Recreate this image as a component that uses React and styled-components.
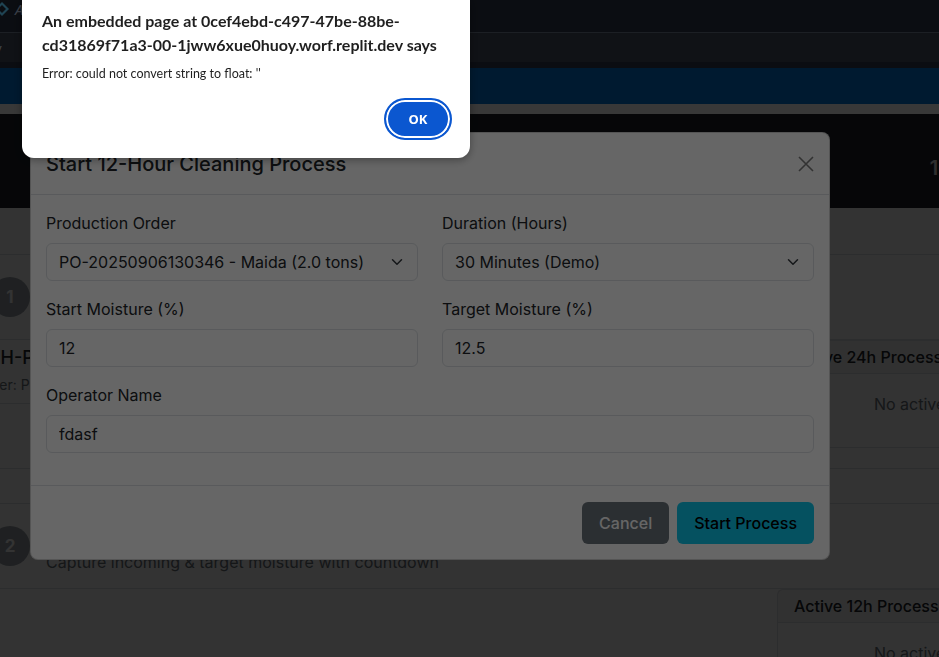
import React from 'react';
import styled, { createGlobalStyle } from 'styled-components';

const Global = createGlobalStyle`
  html, body { margin: 0; padding: 0; height: 100%; overflow: hidden; background: #1c212d; }
  body { font-family: Inter, "Noto Sans", sans-serif; color: #212529; }
  #root { height: 100%; }
  * { box-sizing: border-box; }
`;

const Screen = styled.div`
  position: relative;
  height: 100vh;
  display: flex;
  flex-direction: column;
  overflow: hidden;
`;

/* ---------- host (replit) chrome ---------- */
const TopBar = styled.div`
  height: 33px;
  flex: none;
  background: #1c212d;
  border-bottom: 1px solid #464e5a;
  display: flex;
  align-items: center;
  gap: 6px;
  padding-bottom: 14px;
`;
const Logo = styled.svg`
  margin-left: -5px;
  flex: none;
`;
const TopLabel = styled.span`
  font-family: "Noto Sans", sans-serif;
  font-size: 15px;
  color: #8f9bb0;
  font-style: italic;
`;
const SubBar = styled.div`
  height: 29px;
  flex: none;
  background: #282d37;
  display: flex;
  align-items: center;
  font-family: "Noto Sans", sans-serif;
  font-size: 13px;
  color: #a8b0bd;
  text-indent: -5px;
`;
const Gap = styled.div`
  height: ${p => p.$h}px;
  flex: none;
  background: ${p => p.$bg};
`;

/* ---------- embedded page ---------- */
const Frame = styled.div`
  position: relative;
  flex: 1;
  background: #ffffff;
  overflow: hidden;
`;
const Wrapper = styled.div`
  width: 1155px;
  margin-left: -30px;
`;
const PageHeader = styled.header`
  height: 94px;
  background: #1e232d;
  color: #ffffff;
  display: flex;
  align-items: center;
  justify-content: space-between;
  padding: 0 76px 0 100px;
`;
const HeaderTitle = styled.h1`
  margin: 0;
  font-size: 24px;
  font-weight: 600;
`;
const Clock = styled.div`
  font-size: 20px;
  font-weight: 600;
  padding-top: 14px;
  color: #e6e6e6;
  white-space: nowrap;
`;
const Main = styled.main`
  padding-top: 46px;
  display: flex;
  flex-direction: column;
  gap: 34px;
`;
const StepSection = styled.section`
  border-bottom: 1px solid #dee2e6;
`;
const StepHeader = styled.div`
  height: 86px;
  display: flex;
  align-items: center;
  gap: 16px;
  padding-left: 20px;
  border-top: 1px solid #dee2e6;
  border-bottom: 1px solid #dee2e6;
`;
const StepNum = styled.div`
  width: 40px;
  height: 40px;
  flex: none;
  border-radius: 50%;
  background: #9ca3ab;
  color: #ffffff;
  font-weight: 700;
  font-size: 17px;
  display: flex;
  align-items: center;
  justify-content: center;
`;
const StepText = styled.div`
  display: flex;
  flex-direction: column;
  gap: 4px;
`;
const StepTitle = styled.h2`
  margin: 0;
  font-size: 24px;
  line-height: 1.2;
  font-weight: 500;
`;
const StepSub = styled.p`
  margin: 0;
  font-size: 16px;
  line-height: 24px;
  color: #6c757d;
`;
const StepBody = styled.div`
  display: grid;
  grid-template-columns: 783px 348px;
  gap: 24px;
  padding-bottom: ${p => p.$pb}px;
`;
const ProcessList = styled.div`
  display: flex;
  flex-direction: column;
`;
const ProcessItem = styled.div`
  padding: 6px 12px 8px;
  border-bottom: 1px solid #dee2e6;
`;
const ProcessName = styled.div`
  font-size: 18px;
  line-height: 24px;
  font-weight: 500;
`;
const ProcessMeta = styled.div`
  margin-top: 4px;
  margin-left: -7px;
  font-size: 14px;
  line-height: 21px;
  color: #6c757d;
`;
const ActiveCard = styled.div`
  border: 1px solid #dee2e6;
  border-radius: 6px;
  align-self: start;
`;
const ActiveHead = styled.div`
  padding: 4px 16px;
  background: rgba(0, 0, 0, 0.03);
  border-bottom: 1px solid #dee2e6;
  font-size: 16px;
  line-height: 24px;
  font-weight: 500;
`;
const ActiveBody = styled.div`
  padding: 18px 16px 31px;
  text-align: center;
  font-size: 16px;
  line-height: 24px;
  color: #6c757d;
`;

/* ---------- bootstrap modal ---------- */
const Backdrop = styled.div`
  position: absolute;
  inset: 0;
  background: rgba(0, 0, 0, 0.5);
`;
const ModalLayer = styled.div`
  position: absolute;
  inset: 0;
  display: flex;
  align-items: flex-start;
  padding: 18px 0 0 30px;
`;
const ModalBox = styled.div`
  width: 800px;
  background: #ffffff;
  border: 1px solid rgba(0, 0, 0, 0.175);
  border-radius: 8px;
  display: flex;
  flex-direction: column;
`;
const ModalHead = styled.div`
  height: 62px;
  padding: 0 15px;
  border-bottom: 1px solid #dee2e6;
  display: flex;
  align-items: center;
  justify-content: space-between;
`;
const ModalTitle = styled.h5`
  margin: 0;
  font-size: 20px;
  font-weight: 500;
  line-height: 1.2;
  color: #212529;
`;
const CloseBtn = styled.button`
  width: 24px;
  height: 24px;
  padding: 0;
  border: 0;
  background: transparent;
  opacity: 0.5;
  display: flex;
  align-items: center;
  justify-content: center;
  margin-right: -4px;
`;
const ModalBody = styled.div`
  padding: 16px 15px 0;
  display: grid;
  grid-template-columns: 1fr 1fr;
  column-gap: 24px;
`;
const Field = styled.div`
  grid-column: ${p => (p.$full ? '1 / -1' : 'auto')};
  margin-bottom: 16px;
  display: flex;
  flex-direction: column;
`;
const Label = styled.label`
  font-size: 16px;
  line-height: 24px;
  margin-bottom: 8px;
  color: #212529;
`;
const SelectBox = styled.div`
  height: 38px;
  border: 1px solid #dee2e6;
  border-radius: 6px;
  padding: 0 14px 0 12px;
  display: flex;
  align-items: center;
  justify-content: space-between;
  font-size: 16px;
  color: #212529;
`;
const Input = styled.input`
  height: 38px;
  border: 1px solid #dee2e6;
  border-radius: 6px;
  padding: 0 12px;
  font-family: Inter, "Noto Sans", sans-serif;
  font-size: 16px;
  color: #212529;
  background: #ffffff;
  outline: none;
`;
const ModalFoot = styled.div`
  margin-top: 16px;
  padding: 16px 15px 15px;
  border-top: 1px solid #dee2e6;
  display: flex;
  justify-content: flex-end;
  gap: 8px;
`;
const Btn = styled.button`
  height: 42px;
  padding: 0 17px;
  border: 0;
  border-radius: 6px;
  font-family: Inter, "Noto Sans", sans-serif;
  font-size: 16px;
  font-weight: 500;
  background: ${p => (p.$variant === 'info' ? '#0dcaf0' : '#6c757d')};
  color: ${p => (p.$variant === 'info' ? '#000000' : '#ffffff')};
`;

/* ---------- browser alert ---------- */
const AlertShade = styled.div`
  position: fixed;
  inset: 0;
  background: rgba(0, 0, 0, 0.6);
`;
const AlertBox = styled.div`
  position: fixed;
  top: 0;
  left: 22px;
  width: 448px;
  background: #ffffff;
  border-radius: 0 0 12px 12px;
  box-shadow: 0 2px 8px rgba(0, 0, 0, 0.35);
  padding: 9px 18px 18px 20px;
  font-family: Lato, "Noto Sans", sans-serif;
  display: flex;
  flex-direction: column;
`;
const AlertTitle = styled.div`
  font-size: 16px;
  line-height: 24px;
  font-weight: 700;
  color: #1f1f1f;
`;
const AlertMsg = styled.div`
  margin-top: 7px;
  font-size: 12.5px;
  line-height: 20px;
  color: #1f1f1f;
`;
const AlertActions = styled.div`
  margin-top: 14px;
  display: flex;
  justify-content: flex-end;
`;
const OkBtn = styled.button`
  width: 68px;
  height: 42px;
  border-radius: 999px;
  border: 2px solid #0b57d0;
  box-shadow: inset 0 0 0 2px #ffffff;
  background: #0b57d0;
  color: #ffffff;
  font-family: "Noto Sans", sans-serif;
  font-size: 13px;
  font-weight: 700;
`;

const Chevron = () => (
  <svg width="12" height="12" viewBox="0 0 16 16" fill="none">
    <path d="m2 5 6 6 6-6" stroke="#343a40" strokeWidth="2" strokeLinecap="round" strokeLinejoin="round" />
  </svg>
);

const Step = ({ n, title, sub, activeTitle, children, pb }) => (
  <StepSection>
    <StepHeader>
      <StepNum>{n}</StepNum>
      <StepText>
        <StepTitle>{title}</StepTitle>
        <StepSub>{sub}</StepSub>
      </StepText>
    </StepHeader>
    <StepBody $pb={pb}>
      <ProcessList>{children}</ProcessList>
      <ActiveCard>
        <ActiveHead>{activeTitle}</ActiveHead>
        <ActiveBody>No active processes</ActiveBody>
      </ActiveCard>
    </StepBody>
  </StepSection>
);

export default function App() {
  return (
    <>
      <Global />
      <Screen>
        <TopBar>
          <Logo width="14" height="14" viewBox="0 0 14 14">
            <path d="M7 0 L14 7 L7 14 L0 7 Z" fill="#4fa8d0" />
            <path d="M7 3 L11 7 L7 11 L3 7 Z" fill="#1c212d" />
          </Logo>
          <TopLabel>Agent</TopLabel>
        </TopBar>
        <SubBar>v</SubBar>
        <Gap $h={6} $bg="#1c212d" />
        <Gap $h={36} $bg="#004178" />
        <Gap $h={10} $bg="#8c8c8c" />
        <Frame>
          <Wrapper>
            <PageHeader>
              <HeaderTitle>Cleaning Process Management</HeaderTitle>
              <Clock>10:42:15 AM</Clock>
            </PageHeader>
            <Main>
              <Step
                n="1"
                title="24-Hour Cleaning Process"
                sub="Start the first cleaning cycle for a production order"
                activeTitle="Active 24h Processes"
                pb={20}
              >
                <ProcessItem>
                  <ProcessName>12H-Process Queue</ProcessName>
                  <ProcessMeta>Order: PO-20250906130346</ProcessMeta>
                </ProcessItem>
              </Step>
              <Step
                n="2"
                title="12-Hour Cleaning Process"
                sub="Capture incoming & target moisture with countdown"
                activeTitle="Active 12h Processes"
                pb={20}
              />
            </Main>
          </Wrapper>
          <Backdrop />
          <ModalLayer>
            <ModalBox>
              <ModalHead>
                <ModalTitle>Start 12-Hour Cleaning Process</ModalTitle>
                <CloseBtn aria-label="Close">
                  <svg width="16" height="16" viewBox="0 0 16 16">
                    <path d="M1 1 L15 15 M15 1 L1 15" stroke="#000" strokeWidth="1.6" />
                  </svg>
                </CloseBtn>
              </ModalHead>
              <ModalBody>
                <Field>
                  <Label>Production Order</Label>
                  <SelectBox>
                    <span>PO-20250906130346 - Maida (2.0 tons)</span>
                    <Chevron />
                  </SelectBox>
                </Field>
                <Field>
                  <Label>Duration (Hours)</Label>
                  <SelectBox>
                    <span>30 Minutes (Demo)</span>
                    <Chevron />
                  </SelectBox>
                </Field>
                <Field>
                  <Label>Start Moisture (%)</Label>
                  <Input defaultValue="12" readOnly />
                </Field>
                <Field>
                  <Label>Target Moisture (%)</Label>
                  <Input defaultValue="12.5" readOnly />
                </Field>
                <Field $full>
                  <Label>Operator Name</Label>
                  <Input defaultValue="fdasf" readOnly />
                </Field>
              </ModalBody>
              <ModalFoot>
                <Btn $variant="secondary">Cancel</Btn>
                <Btn $variant="info">Start Process</Btn>
              </ModalFoot>
            </ModalBox>
          </ModalLayer>
        </Frame>
        <AlertShade />
        <AlertBox role="alertdialog">
          <AlertTitle>
            An embedded page at 0cef4ebd-c497-47be-88be-
            <br />
            cd31869f71a3-00-1jww6xue0huoy.worf.replit.dev says
          </AlertTitle>
          <AlertMsg>Error: could not convert string to float: ''</AlertMsg>
          <AlertActions>
            <OkBtn>OK</OkBtn>
          </AlertActions>
        </AlertBox>
      </Screen>
    </>
  );
}
